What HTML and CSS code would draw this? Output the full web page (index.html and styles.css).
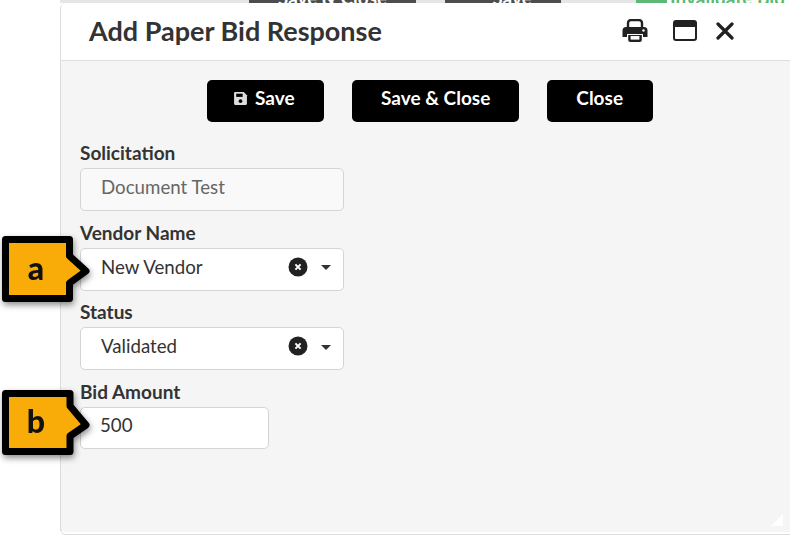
FILE: index.html
```html
<!DOCTYPE html>
<html lang="en">

<head>
    <meta charset="UTF-8">
    <title>Add Paper Bid Response</title>
    <link rel="stylesheet" href="styles.css">
</head>

<body>
    <div class="backdrop">
        <span class="strip strip-one"><span>Save &amp; Close</span></span>
        <span class="strip strip-two"><span>Save</span></span>
        <span class="strip-green"></span>
        <span class="strip-link"><span>Invalidate Bid</span></span>
    </div>

    <div class="window">
        <div class="window-header">
            <h2>Add Paper Bid Response</h2>
            <div class="window-icons">
                <svg class="icon-print" width="26" height="24" viewBox="0 0 26 24">
                    <path d="M6 9V4a3 3 0 0 1 3-3h8a3 3 0 0 1 3 3v5" fill="none" stroke="#212121" stroke-width="2.4"/>
                    <path d="M4 8h18a3.500 3.500 0 0 1 3.500 3.500V18h-4.500v-3H5v3H.5v-6.500A3.500 3.500 0 0 1 4 8z" fill="#212121"/>
                    <path d="M6.200 16h13.600v5a2 2 0 0 1-2 2H8.200a2 2 0 0 1-2-2z" fill="#212121"/>
                    <rect x="8.600" y="17" width="8.800" height="3.600" fill="#fff"/>
                    <circle cx="21.500" cy="11.500" r="1.200" fill="#fff"/>
                </svg>
                <svg class="icon-window" width="24" height="21" viewBox="0 0 24 21">
                    <rect x="1" y="1" width="22" height="19" rx="2" fill="#fff" stroke="#212121" stroke-width="2"/>
                    <rect x="1" y="1" width="22" height="6" fill="#212121"/>
                </svg>
                <svg class="icon-close" width="18" height="18" viewBox="0 0 18 18">
                    <path d="M2 2l14 14M16 2L2 16" stroke="#212121" stroke-width="3.200" stroke-linecap="round"/>
                </svg>
            </div>
        </div>

        <div class="window-body">
            <div class="toolbar">
                <button class="btn btn-save">
                    <svg width="15" height="15" viewBox="0 0 14 14">
                        <path d="M2 1h8l3 3v8a1 1 0 0 1-1 1H2a1 1 0 0 1-1-1V2a1 1 0 0 1 1-1z" fill="#dcdcdc"/>
                        <rect x="3" y="2.500" width="6" height="3" fill="#000"/>
                        <circle cx="7" cy="9.500" r="1.700" fill="#000"/>
                    </svg>
                    Save
                </button>
                <button class="btn">Save &amp; Close</button>
                <button class="btn btn-close">Close</button>
            </div>

            <div class="field">
                <label>Solicitation</label>
                <div class="input input-readonly">Document Test</div>
            </div>

            <div class="field">
                <label>Vendor Name</label>
                <div class="input">
                    <span class="value">New Vendor</span>
                    <svg class="clear" width="20" height="20" viewBox="0 0 20 20">
                        <circle cx="10" cy="10" r="9.500" fill="#212121"/>
                        <path d="M7.400 7.400l5.200 5.200M12.600 7.400l-5.200 5.200" stroke="#fff" stroke-width="2"/>
                    </svg>
                    <span class="caret"></span>
                </div>
            </div>

            <div class="field">
                <label>Status</label>
                <div class="input">
                    <span class="value">Validated</span>
                    <svg class="clear" width="20" height="20" viewBox="0 0 20 20">
                        <circle cx="10" cy="10" r="9.500" fill="#212121"/>
                        <path d="M7.400 7.400l5.200 5.200M12.600 7.400l-5.200 5.200" stroke="#fff" stroke-width="2"/>
                    </svg>
                    <span class="caret"></span>
                </div>
            </div>

            <div class="field">
                <label>Bid Amount</label>
                <div class="input input-amount">500</div>
            </div>
        </div>

        <svg class="resize" width="14" height="14" viewBox="0 0 14 14">
            <path d="M13 1v11a1 1 0 0 1-1 1H1z" fill="#fff"/>
        </svg>
    </div>

    <div class="callout callout-a">
        <svg width="96" height="72" viewBox="0 0 96 72">
            <path d="M5.500 3.500h64V20L86 35 69.500 47v15.500h-64z" fill="#f9ab07" stroke="#000" stroke-width="7" stroke-linejoin="round"/>
        </svg>
        <span>a</span>
    </div>
    <div class="callout callout-b">
        <svg width="96" height="72" viewBox="0 0 96 72">
            <path d="M5.500 3.500H70V16l16 19-16 11v15.500H5.500z" fill="#f9ab07" stroke="#000" stroke-width="7" stroke-linejoin="round"/>
        </svg>
        <span>b</span>
    </div>
</body>

</html>
```

FILE: styles.css
```css
body {
    font-family: 'Lato', sans-serif;
    background-color: #fff;
    margin: 0;
    width: 790px;
    height: 535px;
    overflow: hidden;
    position: relative;
    color: #333;
}

.backdrop {
    position: absolute;
    top: 0;
    left: 60px;
    width: 730px;
    height: 3px;
    overflow: hidden;
    background-color: #e5e5e5;
    font-size: 19px;
    font-weight: 700;
    line-height: 20px;
}

.strip,
.strip-green,
.strip-link {
    position: absolute;
    top: 0;
    height: 3px;
}

.strip {
    background-color: #4d4d4d;
    color: #fff;
    display: flex;
    justify-content: center;
    align-items: flex-end;
}

.strip span,
.strip-link span {
    margin-bottom: -5px;
    white-space: nowrap;
}

.strip-one {
    left: 189px;
    width: 167px;
}

.strip-two {
    left: 385px;
    width: 116px;
    padding-left: 18px;
    box-sizing: border-box;
}

.strip-green {
    left: 576px;
    width: 31px;
    background-color: #5cb874;
}

.strip-link {
    left: 607px;
    width: 123px;
    background-color: #fff;
    color: #5cb874;
    display: flex;
    align-items: flex-end;
    padding-left: 3px;
    box-sizing: border-box;
}

.window {
    position: absolute;
    top: 3px;
    left: 60px;
    width: 738px;
    height: 529px;
    background-color: #f5f5f5;
    border-left: 1px solid #ddd;
    border-bottom: 2px solid #fff;
    box-shadow: 0 1px 0 #ddd;
    border-radius: 6px 0 0 6px;
    overflow: hidden;
}

.window-header {
    height: 58px;
    background-color: #fff;
    border-bottom: 1px solid #ddd;
    display: flex;
    align-items: center;
    justify-content: space-between;
    padding: 0 65px 2px 28px;
    box-sizing: border-box;
}

h2 {
    margin: 0;
    font-size: 27px;
    font-weight: 700;
    color: #333;
}

.window-icons {
    display: flex;
    align-items: center;
}

.icon-window {
    margin-left: 25px;
}

.icon-close {
    margin-left: 19px;
}

.window-body {
    padding: 19px 19px 0;
}

.toolbar {
    display: flex;
    justify-content: center;
    gap: 28px;
    margin-bottom: 20px;
}

.btn {
    height: 42px;
    background-color: #000;
    color: #fff;
    border: none;
    border-radius: 5px;
    font-family: 'Lato', sans-serif;
    font-size: 19px;
    font-weight: 700;
    padding: 0 29px 8px;
    display: flex;
    align-items: center;
    gap: 7px;
}

.btn svg {
    margin-top: 3px;
}

.btn-save {
    padding-left: 26px;
    padding-right: 29.5px;
}

.btn-close {
    padding-right: 30px;
}

.field {
    margin-bottom: 10.67px;
}

label {
    display: block;
    font-size: 19px;
    font-weight: 700;
    line-height: 22px;
    margin-bottom: 4px;
}

.input {
    width: 264px;
    height: 43px;
    box-sizing: border-box;
    background-color: #fff;
    border: 1px solid #d4d4d4;
    border-radius: 5px;
    padding: 0 12px 5px 20px;
    font-size: 18.7px;
    display: flex;
    align-items: center;
}

.input-readonly {
    background-color: #f9f9f9;
    color: #666;
}

.input-amount {
    width: 189px;
    height: 42px;
    padding-left: 19px;
}

.value {
    flex: 1;
}

.caret {
    width: 0;
    height: 0;
    margin: 2px 0 0 13px;
    border-left: 5px solid transparent;
    border-right: 5px solid transparent;
    border-top: 5px solid #333;
}

.resize {
    position: absolute;
    right: 15px;
    bottom: 5px;
}

.callout {
    position: absolute;
    left: 0;
    width: 96px;
    height: 72px;
    filter: drop-shadow(1px 3px 3px rgba(0, 0, 0, 0.45));
}

.callout svg {
    position: absolute;
    left: 0;
    top: 0;
}

.callout span {
    position: absolute;
    left: 26px;
    width: 20px;
    text-align: center;
    font-size: 32px;
    font-weight: 900;
    line-height: 40px;
    color: #111;
}

.callout-a {
    top: 236px;
}

.callout-a span {
    top: 12px;
}

.callout-b {
    top: 390px;
}

.callout-b span {
    top: 11px;
}
```
